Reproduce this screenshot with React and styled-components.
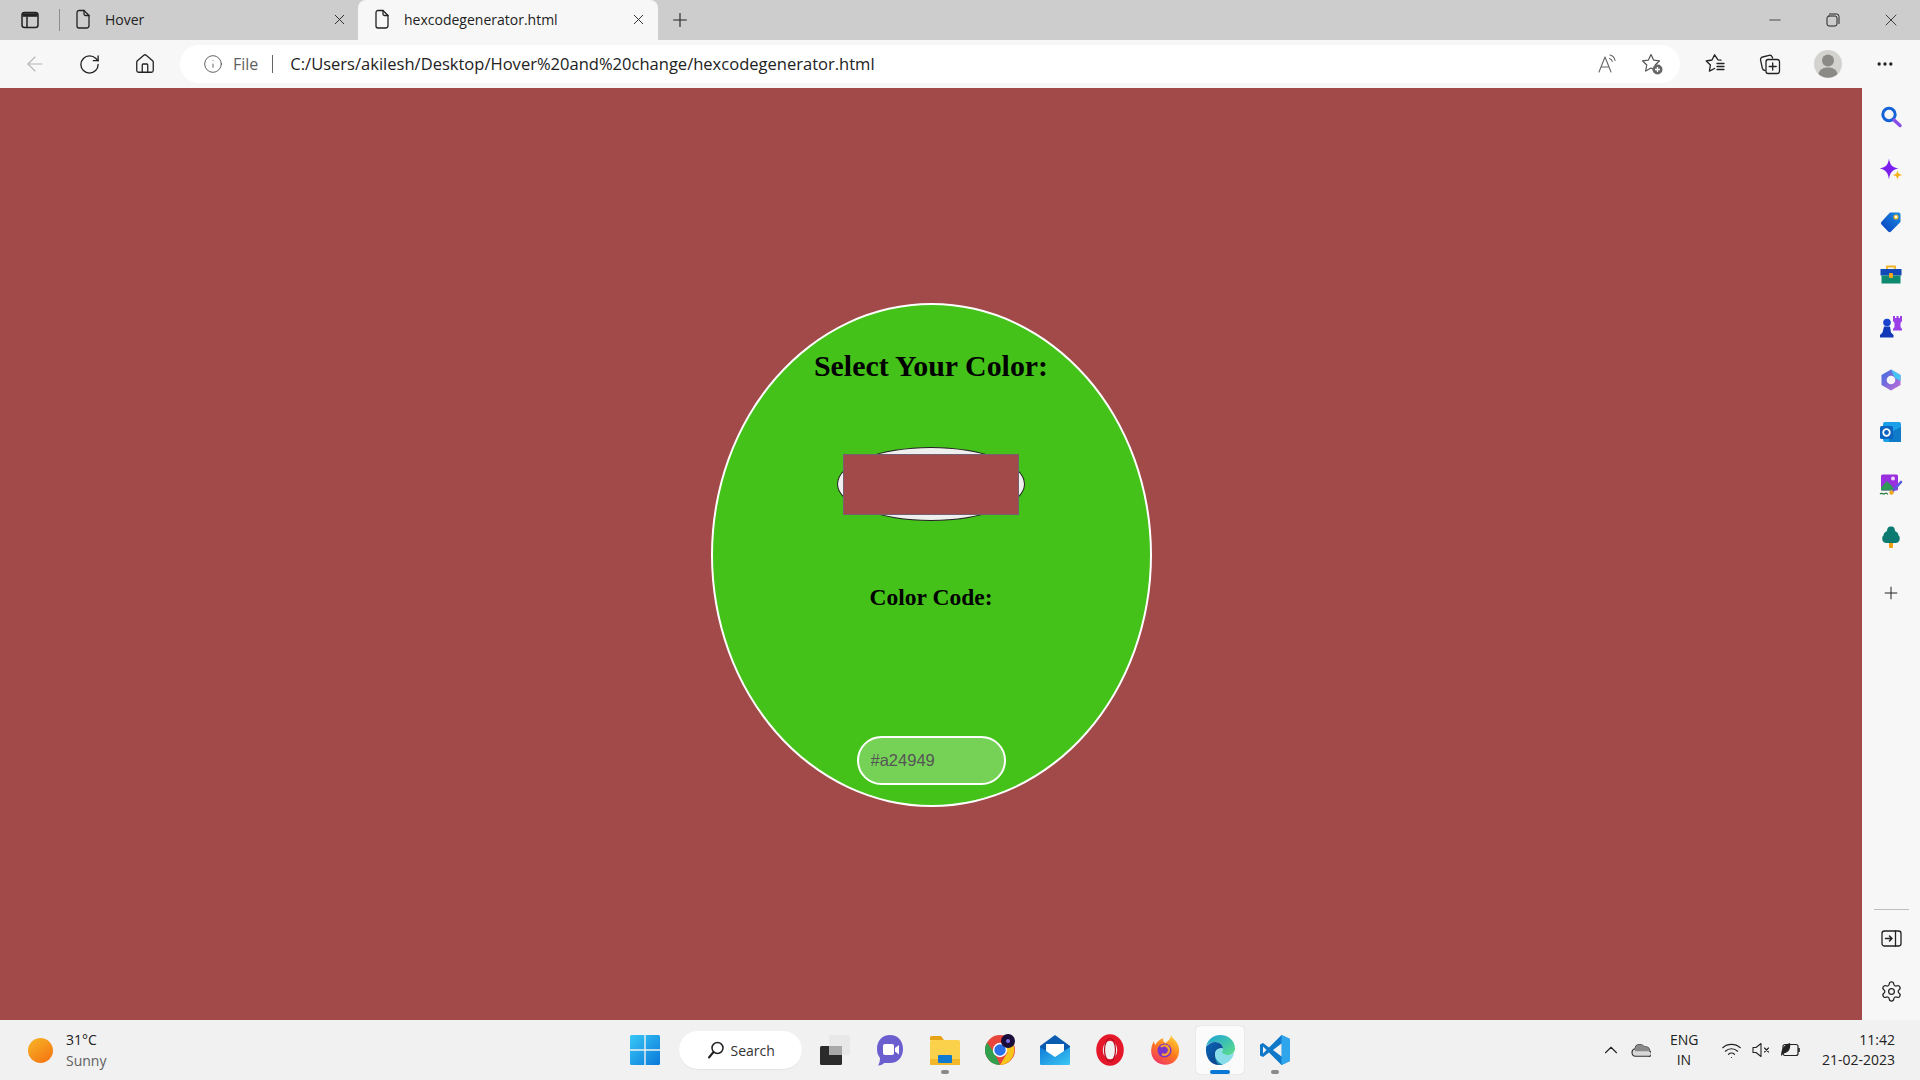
import React from 'react'
import styled, { createGlobalStyle } from 'styled-components'
import { X, Plus, Minus, ArrowLeft, RotateCw, House, Info, Ellipsis, ChevronUp, Wifi, Settings } from 'lucide-react'

const Global = createGlobalStyle`
  html, body { margin: 0; padding: 0; height: 100%; overflow: hidden; }
  body { font-family: "Open Sans", "Noto Sans", sans-serif; color: #1a1a1a; }
`

// small line icons
const Ico = ({ s = 20, children, vb = 24, sw = 1.4, stroke = '#222' }) => (
  <svg width={s} height={s} viewBox={`0 0 ${vb} ${vb}`} fill="none" stroke={stroke} strokeWidth={sw} strokeLinecap="round" strokeLinejoin="round">{children}</svg>
)
const PageIcon = () => (
  <Ico s={20} vb={20} sw={1.3}><path d="M4 3.5a2 2 0 0 1 2-2h5l5 5v10a2.5 2.5 0 0 1-2.5 2.5h-7.5a2 2 0 0 1-2-2z" /><path d="M11 1.5v3.5a1.5 1.5 0 0 0 1.5 1.5h3.5" /></Ico>
)
const TabsIcon = () => (
  <Ico s={20} vb={20} sw={1.5}><rect x="2" y="2.5" width="16" height="15" rx="2.5" /><path d="M2.5 5h15" strokeWidth="3.6" strokeLinecap="butt" /><path d="M7 7v10" /></Ico>
)
const RestoreIcon = () => (
  <Ico s={14} vb={14} sw={1}><rect x="1" y="3" width="10" height="10" rx="2" /><path d="M3.5 1h7a2.5 2.5 0 0 1 2.5 2.5v7" /></Ico>
)
const ReadAloud = () => (
  <Ico s={22} vb={22} sw={1.1} stroke="#666"><path d="M2 19L8 4l6 15M4.2 14h7.6" /><path d="M13 2c2.500 .7 4.500 2.700 5 5.500M12.500 5.500c1.500 .4 2.500 1.500 2.800 3" /></Ico>
)
const StarAdd = () => (
  <svg width="24" height="24" viewBox="0 0 24 24" fill="none">
    <path d="M11 2.5l2.6 5.6 6 .7-4.4 4.2 1.2 6-5.4-3-5.4 3 1.2-6-4.4-4.2 6-.7z" stroke="#555" strokeWidth="1.2" strokeLinejoin="round" />
    <circle cx="17.5" cy="17.5" r="5" fill="#666" />
    <path d="M17.5 15v5M15 17.5h5" stroke="#fff" strokeWidth="1.3" />
  </svg>
)
const Favorites = () => (
  <Ico s={22} vb={22} sw={1.3}><path d="M17 7.2l-3-.4L10.6 1.800 8 7 2.200 8l4.200 4-1 6.200 5.200-2.700" /><path d="M13 10.500h7M13 13.500h7M13 16.500h7" /></Ico>
)
const Collections = () => (
  <Ico s={22} vb={22} sw={1.3}><path d="M6 17.500a3 3 0 0 1-2.600-2L1.600 7.200a2.600 2.600 0 0 1 2-3.200l6.500-1.600a2.600 2.600 0 0 1 3 1.400l.5 1.200" /><rect x="7" y="6.500" width="13.500" height="14" rx="2.200" /><path d="M13.700 10v7M10.200 13.500h7" /></Ico>
)
const Avatar = () => (
  <svg width="28" height="28" viewBox="0 0 28 28">
    <circle cx="14" cy="14" r="14" fill="#d4d2ce" />
    <circle cx="14" cy="10.500" r="6" fill="#8c8a87" />
    <path d="M4.500 24c1-5 5-6.500 9.500-6.500s8.500 1.500 9.500 6.500a14 14 0 0 1-19 0z" fill="#8c8a87" />
  </svg>
)

// edge sidebar tools
const SideSearch = () => (
  <svg width="24" height="24" viewBox="0 0 24 24" fill="none">
    <circle cx="10" cy="9.500" r="6.200" stroke="#1463d8" strokeWidth="3" />
    <path d="M15 15l6 5.500" stroke="#8a4ee8" strokeWidth="3.400" strokeLinecap="round" />
  </svg>
)
const SideSpark = () => (
  <svg width="24" height="24" viewBox="0 0 24 24">
    <path d="M10 .5c1 6.500 3 8.500 9.500 10C13 12 11 14.500 10 21.500 9 14.500 7 12 .5 10.500 7 9 9 7 10 .5z" fill="#7a1ff0" />
    <path d="M18.500 12c.5 3.500 1 4 5 5-4 1-4.500 1.500-5 5-.5-3.500-1-4-5-5 4-1 4.500-1.500 5-5z" fill="#f7b21a" />
  </svg>
)
const SideTag = () => (
  <svg width="24" height="24" viewBox="0 0 24 24">
    <defs><linearGradient id="tagG" x1="0" y1="1" x2="1" y2="0"><stop offset="0" stopColor="#0a3cc0" /><stop offset="1" stopColor="#1a8ee0" /></linearGradient></defs>
    <path d="M11 2.500h8.500a2 2 0 0 1 2 2V12L12 21.500a2 2 0 0 1-2.800 0L2.500 14.500a2 2 0 0 1 0-2.800z" fill="url(#tagG)" />
    <circle cx="17" cy="7" r="2" fill="#fff" stroke="#f2b21a" strokeWidth="1.200" />
  </svg>
)
const SideBox = () => (
  <svg width="24" height="24" viewBox="0 0 24 24">
    <path d="M8 7V3.500h8V7" fill="none" stroke="#f0b429" strokeWidth="1.800" />
    <rect x="1.500" y="6" width="21" height="6.500" fill="#1248b8" />
    <rect x="2.500" y="12.500" width="19" height="8" fill="#0f8a70" />
    <rect x="10" y="10" width="4" height="5" rx="1" fill="#f5a81c" />
  </svg>
)
const SideChess = () => (
  <svg width="24" height="24" viewBox="0 0 24 24">
    <path d="M14 1h2v2h1.500V1h2v2H21V1h2v5l-1.500 2v4l1.500 2v1.500h-9V14l1.500-2V8L14 6z" fill="#9a3fe8" />
    <circle cx="8" cy="7.500" r="3.800" fill="#1a44d0" />
    <path d="M5 11.500h6l1 6 2.500 2.500v2.500H1V20l2.500-2.500z" fill="#1238b8" />
  </svg>
)
const SideM365 = () => (
  <svg width="24" height="24" viewBox="0 0 24 24">
    <defs><linearGradient id="mG" x1="0" y1="0" x2="1" y2="1"><stop offset="0" stopColor="#3a6fe0" /><stop offset="1" stopColor="#c76ad8" /></linearGradient></defs>
    <path d="M12 1.500L21.500 7v10L12 22.500 2.500 17V7z" fill="url(#mG)" />
    <path d="M12 1.500L21.500 7v6L16 10z" fill="#44c6f0" />
    <circle cx="12" cy="12" r="4.300" fill="#f7f7f7" />
  </svg>
)
const SideOutlook = () => (
  <svg width="24" height="24" viewBox="0 0 24 24">
    <rect x="4" y="2" width="18" height="20" rx="2" fill="#1aa0e8" />
    <path d="M10 13l12-6v15H10z" fill="#0f7ac8" />
    <rect x="1" y="6" width="13" height="13" rx="1.500" fill="#0a64c0" />
    <circle cx="7.500" cy="12.500" r="3.300" fill="none" stroke="#fff" strokeWidth="1.800" />
  </svg>
)
const SideImage = () => (
  <svg width="24" height="24" viewBox="0 0 24 24">
    <rect x="2" y="1.500" width="17" height="16" rx="1.500" fill="#9a2fe0" />
    <path d="M2 17.500v-3L8 8l5 5 3 4.500z" fill="#2f9a58" />
    <circle cx="14" cy="5.500" r="2" fill="#f3d7ff" />
    <path d="M13 19l9-10" stroke="#5a58e0" strokeWidth="2.600" strokeLinecap="round" />
    <circle cx="12.500" cy="19.500" r="2.200" fill="#eea820" />
    <path d="M1 21c2-2 3 1 5-.5s2 1 3 .5" fill="none" stroke="#1f7a3c" strokeWidth="1.200" />
  </svg>
)
const SideTree = () => (
  <svg width="24" height="24" viewBox="0 0 24 24">
    <rect x="10" y="17" width="4" height="6" rx="1" fill="#f0a010" />
    <path d="M12 1.500c3 0 4 2 4 4.500 2.500 1 3.500 3 3.500 4.500 2 1 2 7.500-3 7.500H7.500c-5 0-5-6.500-3-7.500C4.500 9 5.500 7 8 6c0-2.500 1-4.500 4-4.500z" fill="#0b7a70" />
  </svg>
)
const SidePanel = () => (
  <Ico s={22} vb={22} sw={1.300}><rect x="2" y="3" width="19" height="15" rx="2.500" /><path d="M15.500 3v15" /><path d="M5.500 10.500h6.500M9.500 8l2.500 2.500-2.500 2.500" strokeWidth="1.500" /></Ico>
)

// taskbar apps
const WinLogo = () => (
  <svg width="30" height="30" viewBox="0 0 30 30">
    <defs><linearGradient id="winG" x1="0" y1="0" x2="1" y2="1"><stop offset="0" stopColor="#38c8f8" /><stop offset="1" stopColor="#0a78d8" /></linearGradient></defs>
    <path d="M0 1.500A1.500 1.500 0 0 1 1.500 0h12.800v14.300H0zM15.700 0h12.800A1.500 1.500 0 0 1 30 1.500v12.800H15.700zM0 15.700h14.300V30H1.500A1.500 1.500 0 0 1 0 28.500zM15.700 15.700H30v12.800a1.500 1.500 0 0 1-1.500 1.500H15.700z" fill="url(#winG)" />
  </svg>
)
const SearchGlass = () => (
  <Ico s={18} vb={18} sw={1.500}><circle cx="10.500" cy="7" r="5.500" /><path d="M6.500 11L2 16.500" strokeWidth="2" /></Ico>
)
const TaskView = () => (
  <svg width="30" height="30" viewBox="0 0 30 30">
    <rect x="0" y="11" width="22" height="19" rx="1.500" fill="#2b2b2b" />
    <rect x="9" y="0" width="21" height="20" rx="1.500" fill="#e6e6e6" opacity=".85" />
    <rect x="9" y="11" width="13" height="9" fill="#a8a8a8" />
  </svg>
)
const Teams = () => (
  <svg width="30" height="32" viewBox="0 0 30 32">
    <path d="M15 1c8 0 13 6 13 14s-5 14-13 14H9c-1 1.500-3 2.500-6 2.500 1-1.500 2-4 2-7.500-2-2.500-3-5-3-9C2 7 7 1 15 1z" fill="#6b5fcf" />
    <rect x="8" y="10" width="11" height="11" rx="2" fill="#fff" />
    <path d="M20 14l4-3v9.500l-4-3z" fill="#fff" />
  </svg>
)
const Explorer = () => (
  <svg width="30" height="30" viewBox="0 0 30 30">
    <path d="M0 2.500A1.500 1.500 0 0 1 1.500 1H11l3 4H0z" fill="#e6a316" />
    <rect x="0" y="5" width="30" height="25" rx="1.500" fill="#fbd04a" />
    <rect x="0" y="24" width="30" height="6" fill="#f2b72a" />
    <rect x="8" y="20" width="14" height="8" rx="1" fill="#0f7ad0" />
  </svg>
)
const Chrome = () => (
  <svg width="30" height="32" viewBox="0 0 30 32">
    <circle cx="15" cy="16" r="15" fill="#e8453c" />
    <path d="M15 31A15 15 0 0 1 2 8.500L9.500 19z" fill="#30a04f" />
    <path d="M15 31l7.500-12.500L15 10h13a15 15 0 0 1-13 21z" fill="#f8c51c" />
    <circle cx="15" cy="16" r="7.200" fill="#fff" />
    <circle cx="15" cy="16" r="5.700" fill="#2a70e8" />
    <circle cx="23" cy="7" r="7" fill="#1a0d3a" />
    <circle cx="23" cy="7" r="2" fill="#7a70e8" />
  </svg>
)
const Mail = () => (
  <svg width="30" height="30" viewBox="0 0 30 30">
    <defs><linearGradient id="mailG" x1="0" y1="0" x2="1" y2="1"><stop offset="0" stopColor="#0f7ad8" /><stop offset="1" stopColor="#3cc8f4" /></linearGradient></defs>
    <path d="M15 0L30 11v10H0V11z" fill="#0a5cb0" />
    <path d="M6 9h18v9l-9 5-9-5z" fill="#fff" />
    <path d="M0 12l15 10 15-10v17a1 1 0 0 1-1 1H1a1 1 0 0 1-1-1z" fill="url(#mailG)" />
  </svg>
)
const Opera = () => (
  <svg width="28" height="32" viewBox="0 0 28 32">
    <ellipse cx="14" cy="16" rx="10.500" ry="12.500" fill="none" stroke="#e5172a" strokeWidth="6.500" />
    <ellipse cx="14" cy="16" rx="5.500" ry="11.500" fill="none" stroke="#b80f20" strokeWidth="1.200" />
  </svg>
)
const Firefox = () => (
  <svg width="30" height="30" viewBox="0 0 30 30">
    <defs><linearGradient id="ffG" x1="0.800" y1="0" x2="0.200" y2="1"><stop offset="0" stopColor="#ffd23a" /><stop offset=".5" stopColor="#ff7a1c" /><stop offset="1" stopColor="#f0306a" /></linearGradient></defs>
    <path d="M21 0c1 3 6 6 7.500 11C30 16 29 22 25 26c-5 5-14 5-19.500 0C1 22 0 15 2.500 9 3 8 3.500 7 4 6c0 2 .5 3 1.500 4 1-3 5-6 8-7-1 2 0 4 2 5 3-2 5.500-5 5.500-8z" fill="url(#ffG)" />
    <circle cx="14.500" cy="15.500" r="7" fill="#7a35c8" />
    <path d="M11 12c3-3 8-1 8 3s-4 6-7 4" fill="none" stroke="#f6a030" strokeWidth="2.200" />
  </svg>
)
const Edge = () => (
  <svg width="30" height="32" viewBox="0 0 30 32">
    <defs>
      <linearGradient id="edA" x1="0" y1="0" x2="1" y2="1"><stop offset="0" stopColor="#1ba0d8" /><stop offset="1" stopColor="#5fe08a" /></linearGradient>
      <linearGradient id="edB" x1="0" y1="0" x2="1" y2="1"><stop offset="0" stopColor="#0b68b8" /><stop offset="1" stopColor="#0a3a80" /></linearGradient>
    </defs>
    <path d="M15 1c9 0 15 6 15 13.500 0 4-3 6.500-7 6.500-3 0-6-1-6-3 0-1 1-1.500 1-3.500C18 11 15 8 10 8 6 8 2 10 1 13 2 6 8 1 15 1z" fill="url(#edA)" />
    <path d="M1 13c2-3 5-5 9-5 5 0 8 3 8 6.500-4-1-8 1-8 6 0 4 3 8 8 10-2 .5-3 .5-4 .5C6 31 0 24 1 13z" fill="url(#edB)" />
    <path d="M14 31c-3-2-4-6-4-10.500 0-5 4-7 8-6 0 2-1 2.500-1 3.500 0 2 3 3 6 3 2 0 4-.5 6-2-1 6-7 12-15 12z" fill="#2cc4d8" opacity=".55" />
  </svg>
)
const VSCode = () => (
  <svg width="30" height="30" viewBox="0 0 30 30">
    <path d="M21.500 0L30 4v22l-8.500 4L9 17.500 3 22l-3-1.500v-11L3 8l6 4.500z" fill="#0f78c8" />
    <path d="M21.500 0L30 4v22l-8.500 4z" fill="#2fa6ec" />
    <path d="M21.500 8.500L13 15l8.500 6.500z" fill="#f2f2f2" />
    <path d="M3 11.500L6.500 15 3 18.500z" fill="#f2f2f2" />
  </svg>
)

// tray
const Cloud = () => (
  <svg width="20" height="14" viewBox="0 0 20 14">
    <path d="M4.500 13.300a3.800 3.800 0 0 1-.5-7.500 5 5 0 0 1 9.300-1.800 4.300 4.300 0 0 1 5.500 4.300 2.600 2.600 0 0 1-1.300 5z" fill="#d8d8d8" stroke="#333" strokeWidth="1.100" />
    <path d="M4 5.800a5 5 0 0 1 9.300-1.800 4.300 4.300 0 0 1 5.500 4.300H4z" fill="#8a8a8a" />
  </svg>
)
const Muted = () => (
  <Ico s={20} vb={20} sw={1.100}><path d="M2 7.500h3L10 3.500v13l-5-4H2z" /><path d="M13.500 8l4 4M17.500 8l-4 4" /></Ico>
)
const Battery = () => (
  <svg width="21" height="16" viewBox="0 0 21 16" fill="none">
    <rect x="3" y="2.500" width="15" height="11" rx="2" stroke="#222" strokeWidth="1.200" />
    <path d="M19 6v4" stroke="#222" strokeWidth="1.600" />
    <path d="M1 14C1 7 4 2.500 10 1c1 5-1 10-6.500 10.500z" fill="#222" />
  </svg>
)

const apps = [
  [<TaskView key="t" />, false, 0],
  [<Teams key="t" />, false, 0],
  [<Explorer key="t" />, false, 1],
  [<Chrome key="t" />, false, 0],
  [<Mail key="t" />, false, 0],
  [<Opera key="t" />, false, 0],
  [<Firefox key="t" />, false, 0],
  [<Edge key="t" />, true, 2],
  [<VSCode key="t" />, false, 1],
]

const sideTools = [SideSearch, SideSpark, SideTag, SideBox, SideChess, SideM365, SideOutlook, SideImage, SideTree]

const App = () => {
  const color = '#a24949'
  return (
    <Screen>
      <Global />
      <TabStrip>
        <TabToggle><TabsIcon /></TabToggle>
        <TabDivider />
        <Tab>
          <PageIcon />
          <TabTitle>Hover</TabTitle>
          <X size={17} strokeWidth={1.3} color="#222" />
        </Tab>
        <Tab $active>
          <PageIcon />
          <TabTitle>hexcodegenerator.html</TabTitle>
          <X size={17} strokeWidth={1.3} color="#222" />
        </Tab>
        <NewTab><Plus size={22} strokeWidth={1.2} color="#222" /></NewTab>
        <WindowControls>
          <WindowButton><Minus size={18} strokeWidth={1} color="#222" /></WindowButton>
          <WindowButton><RestoreIcon /></WindowButton>
          <WindowButton><X size={20} strokeWidth={1} color="#222" /></WindowButton>
        </WindowControls>
      </TabStrip>

      <Toolbar>
        <NavButton><ArrowLeft size={24} strokeWidth={1.1} color="#b5b5b5" /></NavButton>
        <NavButton><RotateCw size={23} strokeWidth={1.4} color="#222" /></NavButton>
        <NavButton><House size={22} strokeWidth={1.4} color="#222" /></NavButton>
        <AddressBar>
          <Info size={20} strokeWidth={1.1} color="#555" />
          <FileLabel>File</FileLabel>
          <AddressDivider />
          <Url>C:/Users/akilesh/Desktop/Hover%20and%20change/hexcodegenerator.html</Url>
          <AddressTools>
            <ReadAloud />
            <StarAdd />
          </AddressTools>
        </AddressBar>
        <ToolGroup>
          <ToolSlot $w={55}><Favorites /></ToolSlot>
          <ToolSlot $w={55}><Collections /></ToolSlot>
          <ToolSlot $w={61}><Avatar /></ToolSlot>
          <ToolSlot $w={53}><Ellipsis size={20} strokeWidth={2} color="#222" /></ToolSlot>
        </ToolGroup>
      </Toolbar>

      <Middle>
        <Page style={{ background: color }}>
          <Circle>
            <Heading>Select Your Color:</Heading>
            <Picker>
              <Swatch style={{ background: color }} />
            </Picker>
            <CodeLabel>Color Code:</CodeLabel>
            <CodeInput readOnly value={color} />
          </Circle>
        </Page>
        <Sidebar>
          {sideTools.map((Tool, i) => (
            <SideSlot key={i}><Tool /></SideSlot>
          ))}
          <SideAdd><Plus size={20} strokeWidth={1.2} color="#222" /></SideAdd>
          <SideBottom>
            <SideRule />
            <SideSlot><SidePanel /></SideSlot>
            <SideSlot><Settings size={23} strokeWidth={1.3} color="#222" /></SideSlot>
          </SideBottom>
        </Sidebar>
      </Middle>

      <Taskbar>
        <Weather>
          <Sun />
          <WeatherText>
            <Temp>31°C</Temp>
            <Sky>Sunny</Sky>
          </WeatherText>
        </Weather>
        <TaskCenter>
          <TaskSlot><WinLogo /></TaskSlot>
          <SearchPill><SearchGlass /><span>Search</span></SearchPill>
          {apps.map(([icon, active, mark], i) => (
            <TaskSlot key={i}>
              <AppTile $active={active}>
                {icon}
                {mark > 0 && <RunMark $wide={mark === 2} />}
              </AppTile>
            </TaskSlot>
          ))}
        </TaskCenter>
        <Tray>
          <ChevronUp size={22} strokeWidth={1.2} color="#222" />
          <CloudSlot><Cloud /></CloudSlot>
          <Lang>ENG<br />IN</Lang>
          <TrayIcons>
            <Wifi size={21} strokeWidth={1.3} color="#222" />
            <Muted />
            <Battery />
          </TrayIcons>
          <Clock>11:42<br />21-02-2023</Clock>
        </Tray>
      </Taskbar>
    </Screen>
  )
}

export default App

const Screen = styled.div`
  width: 1920px;
  height: 1080px;
  display: flex;
  flex-direction: column;
  overflow: hidden;
`
const TabStrip = styled.div`
  height: 40px;
  background: #cdcdcd;
  display: flex;
  align-items: flex-end;
  flex-shrink: 0;
`
const TabToggle = styled.div`
  width: 59px;
  height: 40px;
  padding-left: 20px;
  box-sizing: border-box;
  display: flex;
  align-items: center;
`
const TabDivider = styled.div`
  width: 1px;
  height: 22px;
  background: #8e8e8e;
  margin-bottom: 9px;
`
const Tab = styled.div`
  width: ${({ $active }) => ($active ? '300px' : '298px')};
  height: 40px;
  box-sizing: border-box;
  padding: 0 ${({ $active }) => ($active ? '11px' : '10px')} 2px ${({ $active }) => ($active ? '14px' : '13px')};
  display: flex;
  align-items: center;
  background: ${({ $active }) => ($active ? '#f7f7f7' : 'transparent')};
  border-radius: 8px 8px 0 0;
`
const TabTitle = styled.span`
  flex: 1;
  margin-left: 12px;
  font-size: 14px;
  color: #222;
`
const NewTab = styled.div`
  width: 44px;
  height: 40px;
  display: flex;
  align-items: center;
  justify-content: center;
`
const WindowControls = styled.div`
  margin-left: auto;
  display: flex;
  height: 40px;
`
const WindowButton = styled.div`
  width: 58px;
  display: flex;
  align-items: center;
  justify-content: center;
`
const Toolbar = styled.div`
  height: 48px;
  background: #f7f7f7;
  display: flex;
  align-items: center;
  padding-left: 7px;
  flex-shrink: 0;
`
const NavButton = styled.div`
  width: 55px;
  display: flex;
  justify-content: center;
`
const AddressBar = styled.div`
  width: 1500px;
  height: 38px;
  margin-left: 8px;
  background: #fff;
  border-radius: 19px;
  display: flex;
  align-items: center;
  padding: 0 16px 0 23px;
  box-sizing: border-box;
`
const FileLabel = styled.span`
  margin-left: 10px;
  font-size: 16px;
  color: #5f5f5f;
`
const AddressDivider = styled.div`
  width: 1px;
  height: 18px;
  background: #666;
  margin: 0 17px 0 14px;
`
const Url = styled.span`
  font-size: 16.55px;
  color: #222;
  white-space: nowrap;
  margin-bottom: 2px;
`
const AddressTools = styled.div`
  margin-left: auto;
  display: flex;
  align-items: center;
  gap: 21px;
`
const ToolGroup = styled.div`
  display: flex;
  margin-left: 7px;
`
const ToolSlot = styled.div`
  width: ${({ $w }) => $w}px;
  display: flex;
  justify-content: center;
  align-items: center;
`
const Middle = styled.div`
  flex: 1;
  display: flex;
  min-height: 0;
`
const Page = styled.main`
  flex: 1;
  display: flex;
  align-items: center;
  justify-content: center;
`
const Circle = styled.div`
  width: 441px;
  height: 504px;
  margin-top: 2px;
  box-sizing: border-box;
  border: 2px solid #fff;
  border-radius: 50%;
  background: #44c21a;
  display: flex;
  flex-direction: column;
  align-items: center;
  padding-top: 43px;
`
const Heading = styled.h1`
  margin: 0;
  font: bold 29.9px/36px "Liberation Serif", serif;
  color: #000;
`
const Picker = styled.div`
  width: 188px;
  height: 74px;
  margin-top: 63px;
  box-sizing: border-box;
  border: 1.5px solid #222;
  border-radius: 50%;
  background: #efefef;
  display: flex;
  align-items: center;
  justify-content: center;
`
const Swatch = styled.div`
  width: 176px;
  height: 61px;
  flex-shrink: 0;
  box-sizing: border-box;
  border: 1px solid #76606f;
`
const CodeLabel = styled.h3`
  margin: 62px 0 0;
  font: bold 23.500px/28px "Liberation Serif", serif;
  color: #000;
`
const CodeInput = styled.input`
  width: 149px;
  height: 49px;
  margin-top: 125px;
  box-sizing: border-box;
  border: 2px solid #fff;
  border-radius: 25px;
  padding: 0 12px;
  background: rgba(255, 255, 255, 0.27);
  font: 16.5px "Liberation Sans", sans-serif;
  color: #555;
  outline: none;
`
const Sidebar = styled.aside`
  width: 58px;
  background: #f7f7f7;
  display: flex;
  flex-direction: column;
  align-items: center;
  padding-top: 3px;
  box-sizing: border-box;
`
const SideSlot = styled.div`
  height: 52.500px;
  width: 100%;
  display: flex;
  align-items: center;
  justify-content: center;
  flex-shrink: 0;
`
const SideAdd = styled(SideSlot)`
  margin-top: 3px;
`
const SideBottom = styled.div`
  margin-top: auto;
  width: 100%;
  display: flex;
  flex-direction: column;
  align-items: center;
  padding-bottom: 2px;
`
const SideRule = styled.div`
  width: 35px;
  height: 1px;
  background: #bdbdbd;
  margin-bottom: 3px;
`
const Taskbar = styled.footer`
  height: 60px;
  background: #f1f1f1;
  display: grid;
  grid-template-columns: 1fr auto 1fr;
  align-items: center;
  flex-shrink: 0;
`
const Weather = styled.div`
  display: flex;
  align-items: center;
  padding-left: 28px;
`
const Sun = styled.div`
  width: 25px;
  height: 25px;
  border-radius: 50%;
  background: linear-gradient(145deg, #f7b726, #f56f10);
`
const WeatherText = styled.div`
  margin-left: 13px;
  font-size: 14px;
  line-height: 21px;
`
const Temp = styled.div`
  color: #222;
`
const Sky = styled.div`
  color: #606060;
`
const TaskCenter = styled.div`
  display: flex;
  align-items: center;
`
const TaskSlot = styled.div`
  width: 55px;
  display: flex;
  justify-content: center;
`
const SearchPill = styled.div`
  width: 123px;
  height: 38px;
  margin: 0 6px;
  box-sizing: border-box;
  padding-left: 28px;
  border-radius: 19px;
  background: #fff;
  box-shadow: 0 1px 1px rgba(0, 0, 0, 0.06);
  display: flex;
  align-items: center;
  gap: 6px;
  font-size: 14px;
  color: #333;
`
const AppTile = styled.div`
  position: relative;
  width: 48px;
  height: 48px;
  display: flex;
  align-items: center;
  justify-content: center;
  border-radius: 4px;
  background: ${({ $active }) => ($active ? '#fbfbfb' : 'transparent')};
  box-shadow: ${({ $active }) => ($active ? '0 0 1px rgba(0, 0, 0, 0.25)' : 'none')};
`
const RunMark = styled.div`
  position: absolute;
  left: 50%;
  bottom: 0;
  transform: translateX(-50%);
  width: ${({ $wide }) => ($wide ? '20px' : '8px')};
  height: 4px;
  border-radius: 2px;
  background: ${({ $wide }) => ($wide ? '#0a78d4' : '#8a8a8a')};
`
const Tray = styled.div`
  display: flex;
  align-items: center;
  justify-self: end;
  padding-right: 25px;
`
const CloudSlot = styled.div`
  margin-left: 9px;
  display: flex;
`
const Lang = styled.div`
  margin: 0 0 0 19px;
  width: 28px;
  text-align: center;
  font-size: 14px;
  line-height: 20px;
  color: #222;
`
const TrayIcons = styled.div`
  display: flex;
  align-items: center;
  gap: 9px;
  margin: 0 0 0 23px;
`
const Clock = styled.div`
  margin-left: 21px;
  text-align: right;
  font-size: 14px;
  line-height: 20px;
  color: #222;
`
